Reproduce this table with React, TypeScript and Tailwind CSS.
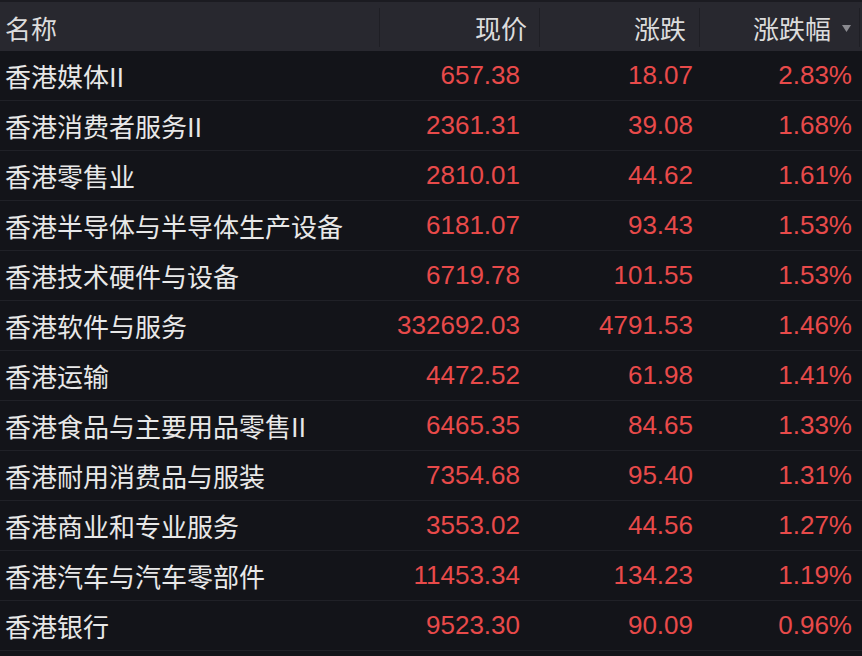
import React from "react";

const rows: [string, string, string, string][] = [
  ["香港媒体II", "657.38", "18.07", "2.83%"],
  ["香港消费者服务II", "2361.31", "39.08", "1.68%"],
  ["香港零售业", "2810.01", "44.62", "1.61%"],
  ["香港半导体与半导体生产设备", "6181.07", "93.43", "1.53%"],
  ["香港技术硬件与设备", "6719.78", "101.55", "1.53%"],
  ["香港软件与服务", "332692.03", "4791.53", "1.46%"],
  ["香港运输", "4472.52", "61.98", "1.41%"],
  ["香港食品与主要用品零售II", "6465.35", "84.65", "1.33%"],
  ["香港耐用消费品与服装", "7354.68", "95.40", "1.31%"],
  ["香港商业和专业服务", "3553.02", "44.56", "1.27%"],
  ["香港汽车与汽车零部件", "11453.34", "134.23", "1.19%"],
  ["香港银行", "9523.30", "90.09", "0.96%"],
];

const cjk = { fontFamily: '"Noto Sans CJK SC", "Noto Sans", sans-serif' };
const num = { fontFamily: '"Liberation Sans", Arial, sans-serif' };

export default function App() {
  return (
    <div className="w-[862px] h-[656px] bg-[#131419] overflow-hidden">
      <div className="h-[2px] bg-[#1b1b21]" />
      <div
        className="grid grid-cols-[380px_160px_160px_162px] h-[49px] bg-[#28282f] text-[#dcdcdc] text-[26px]"
        style={cjk}
      >
        <div className="flex items-center pl-[5px] border-r border-[#1f1f25] my-[6px]">名称</div>
        <div className="flex items-center justify-end pr-[12px] border-r border-[#1f1f25] my-[6px]">现价</div>
        <div className="flex items-center justify-end pr-[13px] border-r border-[#1f1f25] my-[6px]">涨跌</div>
        <div className="flex items-center justify-end pr-[8px] my-[6px] w-[160px] border-r border-[#1f1f25]">
          <span>涨跌幅</span>
          <svg width="9" height="7" viewBox="0 0 9 7" className="ml-[11px] mt-[1px]">
            <polygon points="0,0 9,0 4.5,7" fill="#8a8a90" />
          </svg>
        </div>
      </div>
      {rows.map((r, i) => (
        <div
          key={i}
          className="grid grid-cols-[380px_160px_160px_162px] h-[50px] border-b border-[#202127] text-[26px]"
        >
          <div className="flex items-center pl-[5px] text-[#e8e8e8] whitespace-nowrap" style={cjk}>
            {r[0]}
          </div>
          <div className="flex items-center justify-end pr-[20px] text-[#e84a4a]" style={num}>
            {r[1]}
          </div>
          <div className="flex items-center justify-end pr-[7px] text-[#e84a4a]" style={num}>
            {r[2]}
          </div>
          <div className="flex items-center justify-end pr-[10px] text-[#e84a4a]" style={num}>
            {r[3]}
          </div>
        </div>
      ))}
    </div>
  );
}
